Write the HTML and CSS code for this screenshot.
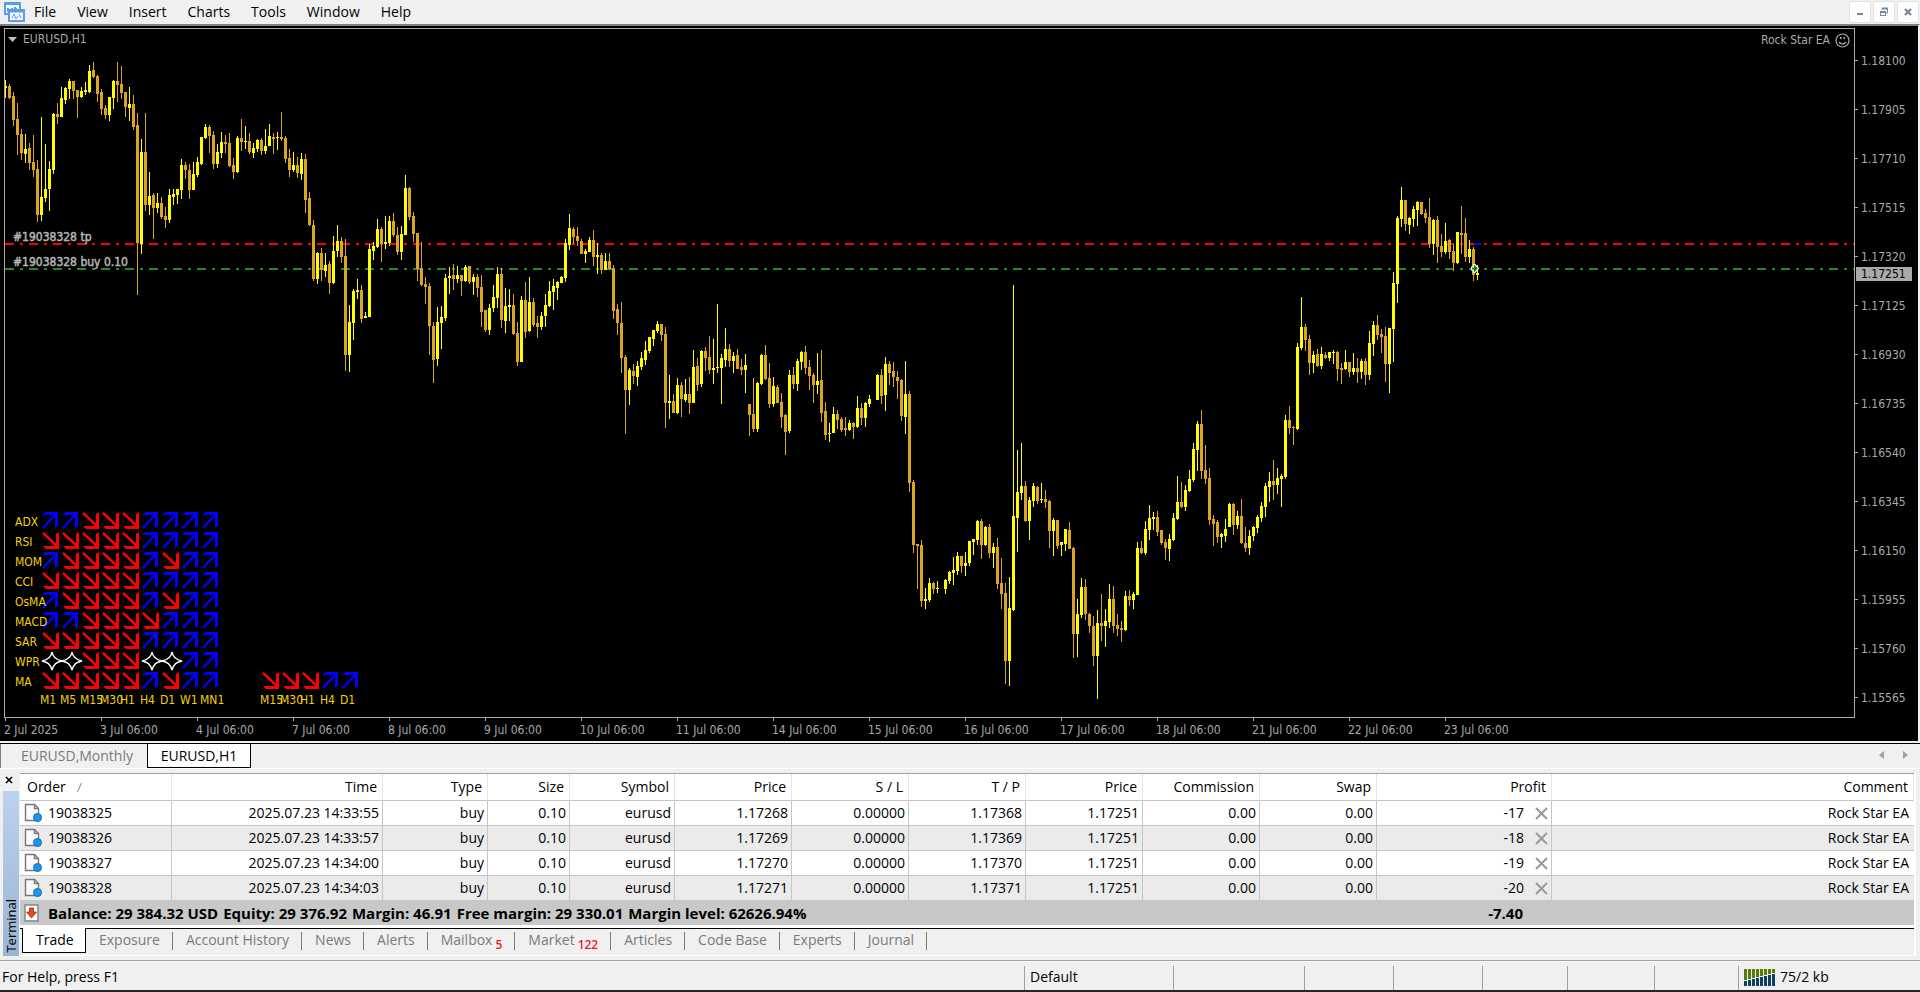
FILE: index.html
```html
<!DOCTYPE html>
<html lang="en">
<head>
<meta charset="utf-8">
<title>EURUSD,H1</title>
<link rel="stylesheet" href="styles.css">
</head>
<body>
<header class="menubar">
  <svg class="app-icon" width="22" height="20" viewBox="0 0 22 20" aria-hidden="true">
    <rect x="1" y="1" width="15" height="11" fill="#f4faff" stroke="#5b9bf0" stroke-width="2"/>
    <path d="M0 2h17M4 6v4M3 8h3M8 6v3M11 5v4M10 7h3" stroke="#5b9bf0" stroke-width="2" fill="none"/>
    <rect x="5" y="8" width="15" height="11" fill="#f4faff" stroke="#5b9bf0" stroke-width="2"/>
    <path d="M4 9h17" stroke="#5b9bf0" stroke-width="3"/>
    <path d="M8 16l2-4 2 5 2-3M15 12l2 4" stroke="#5b9bf0" fill="none"/>
    <path d="M3 1h2M9 1h2M13 1h2M7 8h2M12 8h2M17 8h2M7 19h2M14 19h2" stroke="#5fae7c" stroke-width="1"/>
  </svg>
  <nav class="menu">
    <button>File</button><button>View</button><button>Insert</button><button>Charts</button><button>Tools</button><button>Window</button><button>Help</button>
  </nav>
  <div class="mdi">
    <button aria-label="Minimize"><svg width="10" height="10"><rect x="2" y="6" width="6" height="2" fill="#7a8896"/></svg></button>
    <button aria-label="Restore"><svg width="10" height="10"><path d="M3 3V1.500H8.500V6H7" fill="none" stroke="#7a8896"/><path d="M3 1.500h6" stroke="#7a8896" stroke-width="2"/><rect x="1.500" y="4.500" width="5" height="4" fill="#fff" stroke="#7a8896"/><path d="M1 5h6" stroke="#7a8896" stroke-width="2"/></svg></button>
    <button aria-label="Close"><svg width="10" height="10"><path d="M2 2l6 6M8 2l-6 6" stroke="#7a8896" stroke-width="2.400"/></svg></button>
  </div>
</header>

<main class="chart">
  <div class="plot">
    <svg id="canvas" class="canvas" role="img" aria-label="EURUSD H1 candlestick chart"></svg>
    <div class="chart-title"><svg width="9" height="5"><path d="M0 0h9L4.500 5z" fill="#c0c0c0"/></svg>EURUSD,H1</div>
    <div class="expert">Rock Star EA
      <svg width="15" height="15" viewBox="0 0 15 15"><circle cx="7.500" cy="7.500" r="6.500" fill="none" stroke="#a9a9a9" stroke-width="1.200"/><path d="M4 9q3.500 4 7 0" fill="none" stroke="#a9a9a9" stroke-width="1.200"/><path d="M5 4h1.500v2H5zM8.500 4H10v2H8.500z" fill="#a9a9a9"/></svg>
    </div>
  </div>
  <div class="prices">
    <span>1.18100</span><span>1.17905</span><span>1.17710</span><span>1.17515</span><span>1.17320</span><span>1.17125</span><span>1.16930</span><span>1.16735</span><span>1.16540</span><span>1.16345</span><span>1.16150</span><span>1.15955</span><span>1.15760</span><span>1.15565</span>
    <b class="price-tag">1.17251</b>
  </div>
  <div class="times">
    <span>2 Jul 2025</span><span>3 Jul 06:00</span><span>4 Jul 06:00</span><span>7 Jul 06:00</span><span>8 Jul 06:00</span><span>9 Jul 06:00</span><span>10 Jul 06:00</span><span>11 Jul 06:00</span><span>14 Jul 06:00</span><span>15 Jul 06:00</span><span>16 Jul 06:00</span><span>17 Jul 06:00</span><span>18 Jul 06:00</span><span>21 Jul 06:00</span><span>22 Jul 06:00</span><span>23 Jul 06:00</span>
  </div>
</main>

<div class="chart-tabs">
  <button class="chart-tab">EURUSD,Monthly</button><button class="chart-tab chart-tab-active">EURUSD,H1</button>
  <div class="scrollers">
    <button aria-label="Scroll left"><svg width="5" height="8"><path d="M5 0v8L0 4z" fill="#a0a0a0"/></svg></button>
    <button aria-label="Scroll right"><svg width="5" height="8"><path d="M0 0v8l5-4z" fill="#a0a0a0"/></svg></button>
  </div>
</div>

<section class="terminal">
  <div class="strip">
    <button class="strip-close" aria-label="Close terminal"><svg width="8" height="8"><path d="M1 1l6 6M7 1L1 7" stroke="#000" stroke-width="1.600"/></svg></button>
    <div class="strip-bar"><span>Terminal</span></div>
  </div>
  <div class="panel">
    <table class="orders">
      <colgroup><col class="c-order"><col class="c-time"><col class="c-type"><col class="c-size"><col class="c-symbol"><col class="c-num"><col class="c-num"><col class="c-num"><col class="c-num"><col class="c-num"><col class="c-num"><col class="c-profit"><col></colgroup>
      <thead><tr><th class="first">Order <svg width="5" height="9"><path d="M4.500 0L.5 9" stroke="#888"/></svg></th><th>Time</th><th>Type</th><th>Size</th><th>Symbol</th><th>Price</th><th>S / L</th><th>T / P</th><th>Price</th><th>Commission</th><th>Swap</th><th>Profit</th><th>Comment</th></tr></thead>
      <tbody id="orders"></tbody>
      <tfoot><tr>
        <td colspan="11"><div class="balance">
          <svg width="15" height="18" viewBox="0 0 15 18"><rect x="1" y="1" width="13" height="16" fill="#fff" stroke="#858585" stroke-width="1.500"/><path d="M5.500 4h4v4h3l-5 6-5-6h3z" fill="#e8481c" stroke="#9c2a0c" stroke-width=".8"/></svg>
          <span>Balance: 29 384.32 USD</span><span>Equity: 29 376.92</span><span>Margin: 46.91</span><span>Free margin: 29 330.01</span><span>Margin level: 62626.94%</span></div></td>
        <td class="total">-7.40</td><td></td>
      </tr></tfoot>
    </table>
    <nav class="tabs">
      <button class="tab tab-active">Trade</button><button class="tab">Exposure</button><button class="tab">Account History</button><button class="tab">News</button><button class="tab">Alerts</button><button class="tab">Mailbox<sub>5</sub></button><button class="tab">Market<sub>122</sub></button><button class="tab">Articles</button><button class="tab">Code Base</button><button class="tab">Experts</button><button class="tab">Journal</button>
    </nav>
  </div>
</section>

<footer class="status">
  <span class="help">For Help, press F1</span>
  <span class="s149">Default</span><span class="s131"></span><span class="s89"></span><span class="s89"></span><span class="s85"></span><span class="s87"></span><span class="s84"></span>
  <span class="net"><svg id="net" width="31" height="17"></svg>75/2 kb</span>
</footer>
<script src="chart.js"></script>
</body>
</html>
```
FILE: styles.css
```css
* { box-sizing: border-box; }
body {
  margin: 0;
  min-height: 100vh;
  display: flex;
  flex-direction: column;
  background: #f0f0f0;
  border-bottom: 2px solid #242424;
  color: #000;
  font: 14px/20px "Open Sans", "Noto Sans", sans-serif;
}
button {
  margin: 0;
  padding: 0;
  border: 0;
  background: none;
  color: inherit;
  font: inherit;
  white-space: nowrap;
}
svg { display: block; flex: none; }

.menubar { display: flex; align-items: center; height: 24px; padding: 0 1px 0 4px; }
.menu { display: flex; flex: 1; gap: 21px; padding: 0 0 1px 8px; }
.mdi { display: flex; gap: 2px; padding-bottom: 1px; }
.mdi button {
  display: grid;
  place-items: center;
  width: 22px;
  height: 22px;
  border: 1px solid #e3e3e3;
  background: #fff;
}

.chart {
  flex: 1;
  display: grid;
  grid-template: 1fr 23px / 1fr 63px;
  padding: 2px 0 0 4px;
  border-top: 2px solid #808080;
  border-right: 2px solid #f0f0f0;
  background: #000;
  color: #a9a9a9;
  font: 12px/16px "DejaVu Sans Condensed", "DejaVu Sans", sans-serif;
}
.plot { position: relative; overflow: hidden; border: 1px solid #a9a9a9; }
.canvas { position: absolute; width: 100%; height: 100%; }
.canvas text { fill: #f2d200; }
.canvas .order-label { fill: #b4b4b4; stroke: #b4b4b4; stroke-width: .5px; }
.chart-title { position: absolute; top: 2px; left: 3px; display: flex; align-items: center; gap: 6px; }
.expert { position: absolute; top: 3px; right: 4px; display: flex; align-items: center; gap: 5px; }
.prices { position: relative; padding-top: 8px; overflow: hidden; }
.prices span { display: flex; align-items: center; gap: 3px; height: 49px; }
.prices span:last-of-type { margin-bottom: -16px; }
.prices span::before { content: ""; width: 3px; height: 1px; background: #a9a9a9; }
.price-tag {
  position: absolute;
  top: 239px;
  left: 1px;
  width: 56px;
  padding-left: 5px;
  background: #a9a9a9;
  color: #000;
  font-weight: 400;
  line-height: 14px;
}
.times { grid-column: 1 / 3; display: flex; overflow: hidden; }
.times span { position: relative; flex: none; width: 96px; padding-top: 4px; white-space: nowrap; }
.times span::before { content: ""; position: absolute; top: 0; left: 1px; width: 1px; height: 3px; background: #a9a9a9; }

.chart-tabs {
  display: flex;
  height: 26px;
  margin-top: 2px;
  padding-right: 12px;
  border-top: 1px solid #000;
  border-bottom: 1px solid #fff;
}
.chart-tab { width: 147px; height: 24px; padding-right: 0; padding-left: 6px; border-left: 1px solid #808080; color: #7a7a7a; }
.chart-tab-active { width: 104px; padding: 0; border: 1px solid #000; border-top: 0; background: #fff; color: #000; }
.scrollers { display: flex; gap: 19px; margin-left: auto; padding-bottom: 3px; }

.terminal { display: flex; padding: 4px 4px 4px 3px; border-bottom: 1px solid #a0a0a0; }
.strip { display: flex; flex-direction: column; width: 17px; }
.strip-close { display: grid; place-items: center; height: 18px; padding-bottom: 4px; width: 12px; }
.strip-bar {
  flex: 1;
  width: 16px;
  display: flex;
  align-items: flex-end;
  justify-content: center;
  padding-bottom: 3px;
  background: linear-gradient(#bcd2ee, #9ab4d4);
}
.strip-bar span { writing-mode: vertical-rl; rotate: 180deg; font-size: 13px; line-height: 16px; }
.panel { flex: 1; border-right: 2px solid #fff; border-bottom: 1px solid #fff; }

.orders { width: 100%; table-layout: fixed; border-spacing: 0; border-top: 1px solid #a0a0a0; background: #fff; }
.c-order { width: 152px; }
.c-time { width: 211px; }
.c-type, .c-symbol { width: 105px; }
.c-size { width: 82px; }
.c-num { width: 117px; }
.c-profit { width: 175px; }
.orders th { height: 27px; padding: 0 5px 0 7px; border-right: 1px solid #e5e5e5; border-bottom: 1px solid #c6c6c6; font-weight: 400; text-align: right; }
.orders .first { text-align: left; }
.orders .first svg { display: inline-block; margin-left: 8px; }
.orders td { height: 25px; padding: 0 3px 0 4px; border-right: 1px solid #c6c6c6; border-bottom: 1px solid #c6c6c6; text-align: right; }
.orders tbody td:last-child { padding-right: 5px; border-right: 0; }
.orders tbody tr:nth-child(even) { background: #ebebeb; }
.ticket { display: flex; align-items: center; gap: 6px; }
.profit { display: flex; align-items: center; justify-content: flex-end; gap: 11px; }
.orders tfoot td { height: 24px; border: 0; background: #c8c8c8; font-size: 15px; font-weight: 700; }
.balance { display: flex; align-items: center; gap: 5px; }
.balance svg { margin-right: 4px; }
.orders .total { padding-right: 29px; }

.tabs { display: flex; height: 30px; padding-left: 2px; border-top: 3px solid #fff; box-shadow: inset 0 1px #000; color: #7a7a7a; }
.tab { position: relative; height: 24px; padding: 0 13px; }
.tab::after { content: ""; position: absolute; top: 4px; right: 0; width: 1px; height: 18px; background: #7a7a7a; }
.tab-active { width: 64px; height: 25px; border: 1px solid #000; border-top: 0; background: #fff; color: #000; }
.tab-active::after { display: none; }
.tab sub { margin-left: 3px; color: #ed1c24; font-size: 12px; font-weight: 600; line-height: 0; }

.status { display: flex; height: 29px; padding-top: 4px; border-top: 1px solid #fff; line-height: 22px; }
.status span { height: 24px; padding-left: 5px; border-left: 1px solid #a0a0a0; }
.status .help { flex: 1; padding-left: 2px; border: 0; }
.s149 { width: 149px; }
.s131 { width: 131px; }
.s89 { width: 89px; }
.s85 { width: 85px; }
.s87 { width: 87px; }
.s84 { width: 84px; }
.status .net { display: flex; align-items: center; gap: 5px; width: 182px; padding-bottom: 2px; }
```
FILE: chart.js
```js
// Each run of candles: first bar index, top of the run in pixels, and
// direction (Y rising, G falling) with high, body top, body bottom and low
// measured downwards in thirds of a pixel. "-" is a bar without ticks.
const RUNS = [
  [0, 0, `Y 240 259 265 294,G 252 258 294 297,G 276 288 360 378,G 309 357 405 465,G 387 402 459 480,Y 402 447 462 489,G 429 444 489 510,G 405 486 510 531,G 480 507 645 666,Y 351 591 645 663,Y 432 567 594 606,Y 483 507 567 633,Y 339 342 510 522,G 309 342 351 372,Y 261 294 351 351,Y 261 264 300 312,Y 237 243 267 297,G 243 243 273 297,G 270 270 291 354,Y 261 273 291 294,Y 246 270 276 285,Y 195 213 276 279,G 186 210 231 234,G 225 228 282 306,G 267 276 327 345,G 315 324 345 357,Y 291 291 345 363,Y 240 243 294 327,G 186 243 255 306,G 198 252 279 297,G 276 276 321 351,Y 261 312 324 363,G 285 312 381 390,G 339 375 729 885,Y 417 456 732 762,G 339 456 615 633,Y 516 588 615 645,G 579 585 624 717,Y 579 609 624 639,G 591 609 651 657,G 621 648 660 684,Y 567 585 660 669,Y 567 582 591 615,Y 567 567 585 612,Y 477 495 570 597,G 486 495 510 537,G 492 510 570 597,Y 486 522 570 570,Y 471 486 525 531,Y 411 411 492 495,Y 372 381 414 417,G 375 381 408 459,G 393 405 492 507,Y 432 456 492 504,Y 396 426 459 474,G 405 426 432 459,G 399 429 498 501,G 474 495 516 537,Y 408 414 516 519,G 357 414 426 453,Y 378 423 426 447,G 399 423 456 462,Y 429 444 459 474,Y 417 420 447 456,G 414 420 453 465,Y 387 438 453 462,Y 372 408 438 438,G 399 411 417 462,Y 396 411 414 450,G 336 411 417 423`],
  [70, 100, `G 108 114 177 189,G 147 174 210 231,Y 156 195 210 216,G 171 195 219 234,Y 159 177 222 240,G 162 177 300 339,G 276 294 375 378,G 360 375 537 543,Y 456 459 537 552,G 444 459 510 543,Y 459 495 513 531,G 483 492 549 582,Y 408 453 549 552,Y 375 423 453 471,G 411 423 471 489,G 417 468 765 813,Y 615 666 765 816,Y 567 573 669 720,Y 537 570 576 597,G 555 570 657 669,Y 636 648 654 654,Y 432 447 651 651,Y 426 438 453 480,Y 357 387 441 444,G 381 387 432 486,Y 348 426 432 447,Y 348 363 429 438,G 339 363 405 411,G 381 405 456 465,Y 378 402 456 480,Y 225 264 405 405,G 261 264 351 360,G 336 348 402 426,G 399 399 507 543,G 426 504 555 558,G 531 552 561 612,G 549 558 678 765,G 666 678 780 849,Y 621 666 777 798,Y 618 651 669 747,Y 522 534 654 663,Y 501 528 534 582,G 492 525 537 570,Y 498 525 537 549,G 525 525 543 588,Y 495 501 543 546,G 498 498 546 552,Y 522 531 546 585,G 522 531 564 591,G 525 561 636 681,G 630 630 690 696,Y 612 624 690 705,Y 555 591 624 636,Y 501 522 594 624,G 504 522 660 684,Y 564 618 663 699,Y 567 615 621 663,G 582 615 702 705,G 666 699 786 798,Y 588 600 786 786,G 546 600 696 714,Y 531 606 693 696,G 594 606 675 681,G 648 669 681 714,Y 636 648 681 690,Y 582 615 648 681,Y 543 573 618 621,Y 537 558 576 630,Y 543 546 564 600,Y 528 531 549 549,Y 417 429 534 546,Y 342 384 435 450,G 381 387 411 432,G 381 408 423 438,G 417 423 462 462,Y 447 453 462 489,Y 411 420 456 456,G 390 420 471 498,Y 429 465 471 522,G 459 465 510 522,Y 459 483 510 510,G 459 483 507 510,G 495 504 633 657,G 612 627 669 705,G 606 669 774 819,G 765 771 870 1002,Y 804 810 870 915,G 792 813 828 852,Y 783 798 831 858,Y 756 774 801 810`],
  [160, 180, `Y 483 510 540 555,Y 471 471 513 519,Y 450 450 477 498,Y 423 432 453 459,G 432 432 465 483,G 441 462 669 744,Y 585 663 669 717,G 642 663 699 699,Y 594 615 699 702,G 606 615 657 711,Y 597 642 660 666,G 591 642 669 702,Y 510 561 669 669,G 534 558 615 633,Y 510 513 612 621,G 501 513 534 573,G 468 531 570 582,Y 477 564 570 612,Y 372 561 564 579,Y 522 534 564 672,Y 444 507 540 561,G 492 507 543 561,Y 516 528 543 579,G 507 525 567 567,G 537 561 570 585,Y 522 555 570 639,G 672 672 705 768,G 594 702 747 756,Y 606 609 747 756,Y 522 525 612 615,G 495 525 597 600,G 549 594 672 684,Y 591 618 672 681,G 615 621 669 669,G 639 666 711 744,G 702 705 756 825,Y 570 585 753 759,G 561 585 612 627,Y 537 543 612 633,Y 513 516 546 570,G 498 516 564 582,G 540 561 588 630,G 579 585 615 669,Y 519 603 615 642,G 510 600 699 726,G 666 693 765 780,Y 729 759 762 786,Y 681 702 759 759,G 690 702 720 747,G 711 717 750 756,G 711 744 750 768,Y 720 729 750 753,G 726 729 741 777,Y 648 684 741 744,G 669 684 714 735,Y 666 669 714 741,Y 645 657 672 681,-,Y 582 585 660 660,G 567 585 648 672,Y 531 552 645 693,G 543 552 579 615,G 546 573 591 621,G 573 591 603 657,G 597 600 708 723,Y 543 642 711 762,G 633 642 909 936`],
  [227, 380, `G 300 306 495 519,G 492 492 498 627,G 480 495 663 681,Y 624 657 663 687,Y 594 609 660 666,G 606 609 627 642,Y 603 624 627 639,-,Y 597 600 627 642,Y 573 576 603 612,Y 531 570 579 615,Y 516 528 573 585,G 528 528 558 579`],
  [240, 270, `Y 846 879 888 918,Y 813 813 879 888,Y 807 807 816 855,Y 750 753 810 825,G 747 753 825 867,Y 768 771 825 828,G 762 771 849 864,Y 819 831 849 894,G 804 831 942 957,G 864 939 972 1017,G 939 969 1173 1242,Y 921 1014 1173 1248,Y 45 738 1020 1023,Y 540 666 744 846,Y 519 648 669 690,G 633 648 753 756,Y 681 690 753 810,Y 639 648 693 711,G 648 651 693 702,Y 639 687 690 699,G 660 687 696 714,G 690 693 783 834,Y 744 750 783 858,G 750 750 828 837,Y 816 816 825 858,Y 777 777 822 843,G 756 780 837 837,G 831 834 1092 1164,Y 987 1032 1092 1161,Y 924 951 1035 1044,G 927 951 1032 1050,G 1029 1032 1068 1089,G 1038 1068 1158 1188,Y 1020 1059 1158 1287,G 972 1059 1068 1113,Y 1017 1053 1068 1131,Y 942 987 1056 1074,G 948 987 1068 1089,G 1032 1065 1077 1098,G 1053 1074 1080 1116,Y 963 978 1080 1083,G 960 978 990 1008,Y 966 972 990 1017,Y 816 834 975 975,G 813 834 849 852,Y 753 777 849 855,Y 705 744 780 810,Y 726 741 747 780,G 723 741 786 798,G 780 780 819 825,G 807 816 834 870,Y 792 807 837 873,Y 729 744 810 813,Y 618 696 747 750,G 636 696 711 714,Y 645 660 711 723,Y 600 627 663 666,Y 519 537 630 636,Y 453 462 540 603,G 420 462 603 627,G 525 600 627 642,G 594 624 750 765,G 735 747 762 828,G 750 756 801 819,Y 789 792 801 834,Y 747 777 798 816,Y 699 702 771 771,G 699 702 765 795,Y 723 738 765 777,G 687 738 819 822,G 771 819 834 846,Y 780 798 834 855,Y 768 771 798 813,Y 735 741 774 789,Y 696 708 744 756,Y 639 648 711 741,Y 606 633 651 696,G 570 633 645 690,Y 594 624 645 672,Y 612 618 627 711,Y 435 450 621 627,G 408 450 474 492,G 468 471 474 525,Y 219 231 477 480,Y 81 171 234 240,G 162 171 210 243,G 195 207 279 315,Y 243 255 279 309,G 237 252 288 291,Y 231 252 288 297,G 246 255 264 267,Y 246 246 264 273,Y 240 246 249 282,G 243 246 297 333,G 279 294 300 342,Y 240 276 297 300,G 276 276 306 321,Y 249 294 306 315,G 264 294 306 339`],
  [339, 180, `Y 537 543 576 597,G 534 543 585 615,Y 453 489 585 600,Y 423 435 492 528,G 405 435 465 480,G 447 462 471 519,G 441 468 552 606,Y 444 444 552 639,Y 276 309 447 546,Y 108 114 312 369,Y 21 60 117 141,G 60 60 132 153,Y 111 114 135 162,Y 78 87 117 141,Y 63 66 90 138,G 66 66 102 105,G 87 99 114 129,G 54 111 192 204,Y 117 120 192 225,G 108 120 201 249,G 162 198 216 231,Y 129 183 216 222,G 177 180 216 237,G 192 213 249 273,Y 156 156 249 252,G 78 159 165 222,G 114 159 231 246,Y 180 207 231 249,G 201 207 285 303,Y 255 279 285 300`]
];

const rect = (x, y, w, h, fill) => `<rect x="${x}" y="${y}" width="${w}" height="${h}" fill="${fill}"/>`;
const label = (x, y, text, cls = "") => `<text x="${x}" y="${y}" class="${cls}">${text}</text>`;

function candles() {
  let out = "";
  for (const [start, top, list] of RUNS) {
    list.split(",").forEach((item, i) => {
      if (item === "-") return;
      const [dir, ...v] = item.split(" ");
      const [high, open, close, low] = v.map(n => top + Math.round(n / 3));
      const x = 5 + 4 * (start + i);
      const fill = dir === "Y" ? "#ffff00" : "#daa520";
      out += rect(x, high, 1, low - high, fill) + rect(x - 1, open, 3, Math.max(1, close - open), fill);
    });
  }
  return out;
}

const line = (y, color) => `<line x1="5" x2="4000" y1="${y}" y2="${y}" stroke="${color}" stroke-width="2" stroke-dasharray="9 6 3 6"/>`;

const SHAPES = {
  U: (x, y) => `<g transform="translate(${x} ${y})"><path d="M3 0H16V14L13 16V3H0Z" fill="#00f"/><path d="M1 16L14 2" stroke="#00f" stroke-width="2.400"/></g>`,
  D: (x, y) => `<g transform="translate(${x + 1} ${y})"><path d="M16 0V17H3L0 14H13V2Z" fill="#f00"/><path d="M0 1L14 14" stroke="#f00" stroke-width="2.400"/></g>`,
  S: (x, y) => `<path transform="translate(${x + 10} ${y + 9})" d="M0-9Q1-2 10 0Q2 1 0 9Q-2 1-10 0Q-1-2 0-9Z" fill="#000" stroke="#fff" stroke-width="1.500"/>`
};
const SIGNALS = [
  ["ADX", "UUDDDUUUU"], ["RSI", "DDDDDUUUU"], ["MOM", "UDDDDUDUU"],
  ["CCI", "DDDDDUUUU"], ["OsMA", "UDDDDUDUU"], ["MACD", "UUDDDDUUU"],
  ["SAR", "DDDDDUUUU"], ["WPR", "SSDDDSSUU"], ["MA", "DDDDDUDUU"]
];
function signals() {
  let out = "";
  const draw = (x, y, row) => [...row].forEach((s, i) => { out += SHAPES[s](x + 20 * i, y); });
  SIGNALS.forEach(([name, row], r) => {
    draw(42, 512 + 20 * r, row);
    out += label(15, 526 + 20 * r, name);
  });
  draw(262, 672, "DDDUU");
  "M1 M5 M15 M30 H1 H4 D1 W1 MN1".split(" ").forEach((t, i) => { out += label(40 + 20 * i, 704, t); });
  "M15 M30 H1 H4 D1".split(" ").forEach((t, i) => { out += label(260 + 20 * i, 704, t); });
  return out;
}

document.getElementById("canvas").innerHTML =
  `<g transform="translate(-5 -29)"><g shape-rendering="crispEdges">${line(244, "#f00")}${line(269, "#228b22")}${candles()}${rect(1474, 243, 7, 2, "#00f")}</g>` +
  `<path d="M1471.500 267h2v-2.500h1.500l3.500 4-3.500 4h-1.500v-2.500h-2z" fill="#008000" stroke="#fff" stroke-width="1.200"/>` +
  label(13, 241, "#19038328 tp", "order-label") + label(13, 266, "#19038328 buy 0.10", "order-label") +
  signals() + "</g>";

const DOC = `<svg width="18" height="20" viewBox="0 0 18 20"><path d="M1.500 1.500h9l4 4v12h-13z" fill="#fafafa" stroke="#777" stroke-width="1.400"/><path d="M10.500 1.500v4h4" fill="none" stroke="#777" stroke-width="1.400"/><circle cx="13.500" cy="14.500" r="4" fill="#1c96e8" stroke="#0e6fb5"/></svg>`;
const CROSS = `<svg width="13" height="13"><path d="M1 1l11 11M12 1L1 12" stroke="#999" stroke-width="2"/></svg>`;
const ORDERS = [
  ["19038325", "14:33:55", "1.17268", "1.17368", "-17"],
  ["19038326", "14:33:57", "1.17269", "1.17369", "-18"],
  ["19038327", "14:34:00", "1.17270", "1.17370", "-19"],
  ["19038328", "14:34:03", "1.17271", "1.17371", "-20"]
];
document.getElementById("orders").innerHTML = ORDERS.map(([id, time, open, tp, profit]) =>
  `<tr><td><div class="ticket">${DOC}${id}</div></td>` +
  [`2025.07.23 ${time}`, "buy", "0.10", "eurusd", open, "0.00000", tp, "1.17251", "0.00", "0.00"].map(c => `<td>${c}</td>`).join("") +
  `<td><div class="profit">${profit}<button aria-label="Close order ${id}">${CROSS}</button></div></td><td>Rock Star EA</td></tr>`).join("");

document.getElementById("net").innerHTML = Array.from({ length: 8 }, (_, i) =>
  rect(4 * i, 0, 3, 11 - i, "#5a7a0a") + rect(4 * i, 12 - i, 3, 5 + i, "#0b4263")).join("");
```
